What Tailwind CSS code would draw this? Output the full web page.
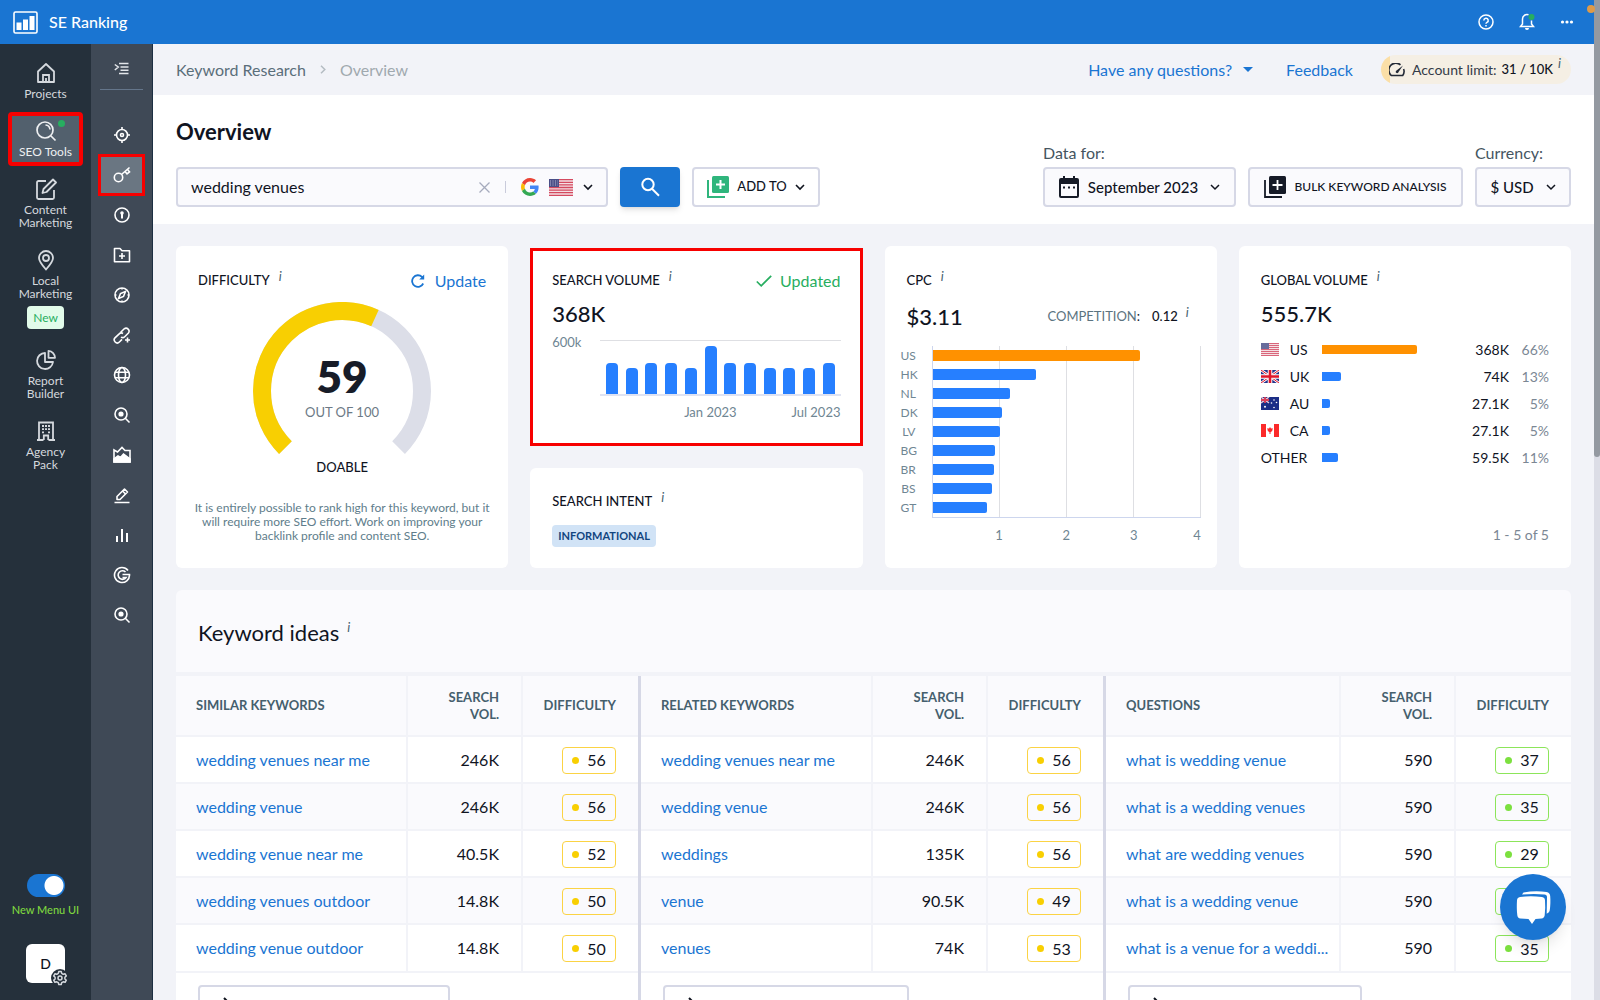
<!DOCTYPE html>
<html lang="en">
<head>
    <meta charset="UTF-8">
    <meta name="viewport" content="width=device-width, initial-scale=1.0">
    <title>SE Ranking - Keyword Research</title>
    <script src="https://cdn.jsdelivr.net/npm/@tailwindcss/browser@4"></script>
</head>
<body class="h-screen overflow-hidden flex flex-col bg-[#f2f3f8] font-['Lato','Noto_Sans',sans-serif] text-base text-[#10141f]">

    <!-- Top bar -->
    <header class="h-11 shrink-0 flex items-center justify-between bg-[#1a75d2] text-white pl-[13px] pr-[26px]">
        <a href="#" class="flex items-center gap-[11px] font-medium">
            <svg class="w-[25px] h-[23px]" viewBox="0 0 25 23"><rect x="1" y="1" width="23" height="21" rx="1.5" fill="none" stroke="#fff" stroke-width="1.6"/><path fill="#fff" d="M3.5 11.5h5V19h-5zM10 8.500h5V19h-5zM16.500 5h5v14h-5z"/></svg>
            SE Ranking
        </a>
        <div class="flex items-center gap-[25px]">
            <button aria-label="Help">
                <svg class="w-4 h-4" viewBox="0 0 16 16" fill="none" stroke="#fff" stroke-width="1.5"><circle cx="8" cy="8" r="7"/><path d="M5.800 6.400a2.200 2.200 0 1 1 3.200 2c-.7.4-1 .7-1 1.400"/><path d="M8 11v1.400"/></svg>
            </button>
            <button aria-label="Notifications">
                <svg class="w-4 h-[18px]" viewBox="0 0 16 18"><path fill="none" stroke="#fff" stroke-width="1.5" d="M9.500 1.800A4.500 4.500 0 0 0 3.500 6v5L1.500 13.500h13L12.500 11V7.500"/><path fill="#fff" d="M6 15h4a2 2 0 0 1-4 0z"/><circle cx="12.500" cy="4" r="3" fill="#27ae60"/></svg>
            </button>
            <button aria-label="More">
                <svg class="w-[14px] h-4" viewBox="0 0 14 16" fill="#fff"><circle cx="2.500" cy="8" r="1.600"/><circle cx="7" cy="8" r="1.600"/><circle cx="11.500" cy="8" r="1.600"/></svg>
            </button>
        </div>
    </header>

    <div class="flex flex-1 min-h-0">
        <!-- Main menu -->
        <nav class="w-[91px] shrink-0 flex flex-col bg-[#25303b] text-[#d5d9de] text-xs leading-[13px] text-center pt-2">
            <a href="#" class="flex flex-col items-center gap-[3px] py-[10px]">
                <svg class="w-[22px] h-[22px]" viewBox="0 0 22 22" fill="none" stroke="currentColor" stroke-width="1.8"><path d="M3 9.500 11 2l8 7.500V20H3z" stroke-linejoin="round"/><path d="M8 20v-7h6v7M11 20v-4"/></svg>
                Projects
            </a>
            <a href="#" class="relative flex flex-col items-center gap-[3px] mx-2 my-[2px] py-1 border-4 border-[#f70000] rounded-sm bg-[#52606d] text-[#eef0f2]">
                <svg class="w-[22px] h-[22px]" viewBox="0 0 22 22" fill="none" stroke="currentColor" stroke-width="1.700"><circle cx="10" cy="10" r="8"/><path d="m16 16 4.500 4.500M10.500 5a5 5 0 0 1 4.500 4.500"/></svg>
                <span class="absolute right-[14px] top-1 w-[7px] h-[7px] rounded-full bg-[#27ae60]"></span>
                <span class="whitespace-nowrap">SEO Tools</span>
            </a>
            <a href="#" class="flex flex-col items-center gap-[3px] py-[10px]">
                <svg class="w-[22px] h-[22px]" viewBox="0 0 22 22" fill="none" stroke="currentColor" stroke-width="1.800" stroke-linejoin="round"><path d="M11 3H3.500A1.500 1.500 0 0 0 2 4.500v15A1.500 1.500 0 0 0 3.500 21h14a1.500 1.500 0 0 0 1.500-1.500V12"/><path d="M18 1.500 21 4.500 11.500 14 7.500 15l1-4z"/></svg>
                <span>Content<br>Marketing</span>
            </a>
            <a href="#" class="flex flex-col items-center gap-[3px] py-[10px]">
                <svg class="w-[22px] h-[22px]" viewBox="0 0 22 22" fill="none" stroke="currentColor" stroke-width="1.800"><path d="M11 20.500C7 16 4 12.500 4 9a7 7 0 0 1 14 0c0 3.500-3 7-7 11.500z"/><circle cx="11" cy="9" r="3"/></svg>
                <span>Local<br>Marketing</span>
                <span class="mt-[3px] w-[37px] h-[23px] leading-[23px] rounded bg-[#e2fbea] text-[#27ae60]">New</span>
            </a>
            <a href="#" class="flex flex-col items-center gap-[3px] py-[10px]">
                <svg class="w-[22px] h-[22px]" viewBox="0 0 22 22" fill="none" stroke="currentColor" stroke-width="1.800" stroke-linejoin="round"><path d="M10 4a8 8 0 1 0 8 9h-8z"/><path d="M13.500 1.800a7 7 0 0 1 6.500 7h-6.500z"/></svg>
                <span>Report<br>Builder</span>
            </a>
            <a href="#" class="flex flex-col items-center gap-[3px] py-[10px]">
                <svg class="w-[22px] h-[22px]" viewBox="0 0 22 22" fill="none" stroke="currentColor" stroke-width="1.800"><path d="M4 20V2.500h14V20M2 20h6.500M13.500 20H20M8.800 20v-4.500h4.400V20"/><path d="M7 6h2M10 6h2M13 6h2M7 9.200h2M10 9.200h2M13 9.200h2M7 12.400h2M13 12.400h2"/></svg>
                <span>Agency<br>Pack</span>
            </a>
            <label class="mt-auto flex flex-col items-center gap-[6px] text-[11px] text-[#7ed63f] whitespace-nowrap font-medium">
                <input type="checkbox" checked class="appearance-none w-[38px] h-[23px] rounded-full bg-[#1a75d2] bg-[radial-gradient(circle_at_27px_center,white_9px,transparent_10px)]">
                New Menu UI
            </label>
            <button class="relative mt-7 mb-[17px] mx-auto w-[39px] h-[39px] rounded-md bg-white text-[#10141f] text-sm font-medium">D
                <svg class="absolute -right-1 -bottom-1 w-[18px] h-[18px]" viewBox="0 0 18 18"><circle cx="9" cy="9" r="9" fill="#25303b"/><path fill="none" stroke="#d5d9de" stroke-width="1.500" stroke-linejoin="round" d="m7.800 2.500h2.400l.5 1.900 1.500.9 1.900-.5 1.200 2.100-1.400 1.300v1.700l1.400 1.300-1.200 2.100-1.900-.5-1.500.9-.5 1.900H7.800l-.5-1.900-1.500-.9-1.900.5-1.200-2.100 1.400-1.300V8.200L2.700 6.900l1.200-2.100 1.900.5 1.500-.9z"/><circle cx="9" cy="9" r="2" fill="none" stroke="#d5d9de" stroke-width="1.500"/></svg>
            </button>
        </nav>

        <!-- SEO tools menu -->
        <nav class="w-[62px] shrink-0 flex flex-col bg-[#3f4956] border-r border-[#1d2f42] text-white">
            <button aria-label="Expand menu" class="mx-[9px] h-[46px] mb-[25px] flex items-center justify-center border-b border-[#64758a]">
                <svg class="w-[15px] h-[13px] mt-1" viewBox="0 0 15 13" fill="none" stroke="#e3e6ea" stroke-width="1.500"><path d="M5 1.500h9.500M6.500 5h8M6.500 8.200h8M5 11.500h9.500M.8 2.500 4.300 5 .8 8"/></svg>
            </button>
            <div id="toolMenu" class="flex flex-col items-center"></div>
        </nav>

        <main class="flex-1 min-w-0 flex flex-col">
            <div class="h-[51px] shrink-0 flex items-center px-[23px]">
                <nav class="flex items-center gap-[14px]" aria-label="Breadcrumb">
                    <a href="#" class="text-[#5a6e7a]">Keyword Research</a>
                    <svg class="w-[6px] h-[9px]" viewBox="0 0 6 9" fill="none" stroke="#b4bcc2" stroke-width="1.500"><path d="m1 .8 3.800 3.700L1 8.200"/></svg>
                    <span class="text-[#a0a9af]">Overview</span>
                </nav>
                <div class="ml-auto flex items-center text-[#1a75d2]">
                    <button class="flex items-center gap-[11px]">Have any questions?
                        <svg class="w-[10px] h-[5px]" viewBox="0 0 10 5" fill="currentColor"><path d="M0 0h10L5 5z"/></svg>
                    </button>
                    <a href="#" class="ml-[33px]">Feedback</a>
                    <div class="ml-7 w-[190px] h-[29px] pl-2 flex items-center rounded-full bg-[linear-gradient(90deg,#fbdfa7_9px,#f5efe4_9px)] text-sm text-[#333a47]">
                        <svg class="w-4 h-[14px] mr-[7px]" viewBox="0 0 16 14" fill="none" stroke="#222936" stroke-width="1.600"><path d="M11.500 1.800A6.800 6.800 0 0 0 2.300 12.500h11.400a6.800 6.800 0 0 0 .9-6.500"/><path d="M14 2.500 9.500 9a1.400 1.400 0 1 1-2-1.500z" fill="#222936" stroke="none"/></svg>
                        Account limit:
                        <span class="ml-[5px] text-[13px] text-[#10141f] font-medium">31 / 10K</span>
                        <i class="ml-[5px] mb-3 text-[13px] text-[#45606d]">i</i>
                    </div>
                </div>
            </div>

            <section class="h-[129px] shrink-0 bg-white px-[23px] flex justify-between items-end pb-[17px]">
                <div>
                    <h1 class="text-[22px] leading-7 font-bold mb-[21px]">Overview</h1>
                    <div class="flex gap-3">
                        <div class="w-[432px] h-10 flex items-center px-[13px] border-2 border-[#d6d8e6] rounded bg-[#fafafd]">
                            <input type="text" value="wedding venues" aria-label="Keyword" class="flex-1 min-w-0 outline-none">
                            <button aria-label="Clear">
                                <svg class="w-[11px] h-[11px]" viewBox="0 0 11 11" stroke="#a6abbd" stroke-width="1.300"><path d="m.5.5 10 10M10.500.5l-10 10"/></svg>
                            </button>
                            <span class="mx-[15px] w-px h-3 bg-[#c9cbdb]"></span>
                            <button aria-label="Search engine" class="flex items-center gap-[10px]">
                                <svg class="w-[18px] h-[18px]" viewBox="0 0 48 48"><path fill="#EA4335" d="M24 9.500c3.540 0 6.710 1.220 9.210 3.600l6.850-6.850C35.900 2.380 30.470 0 24 0 14.620 0 6.510 5.380 2.560 13.220l7.980 6.190C12.430 13.720 17.740 9.500 24 9.500z"/><path fill="#4285F4" d="M46.980 24.550c0-1.570-.15-3.090-.38-4.550H24v9.020h12.940c-.58 2.960-2.260 5.480-4.780 7.180l7.730 6c4.510-4.180 7.090-10.360 7.090-17.650z"/><path fill="#FBBC05" d="M10.530 28.590c-.48-1.450-.76-2.990-.76-4.590s.27-3.140.76-4.590l-7.980-6.190C.92 16.460 0 20.120 0 24c0 3.880.92 7.540 2.560 10.780l7.970-6.190z"/><path fill="#34A853" d="M24 48c6.480 0 11.930-2.130 15.890-5.810l-7.730-6c-2.150 1.450-4.920 2.300-8.160 2.300-6.260 0-11.570-4.220-13.470-9.910l-7.980 6.190C6.510 42.620 14.620 48 24 48z"/></svg>
                                <svg class="w-6 h-[17px]" viewBox="0 0 24 17"><rect width="24" height="17" fill="#f4dfe3"/><path stroke="#d44a60" stroke-width="1.300" d="M0 .7h24M0 3.300h24M0 5.900h24M0 8.500h24M0 11.100h24M0 13.700h24M0 16.300h24"/><rect width="10" height="8" fill="#4a4f87"/><path stroke="#b4b6d2" stroke-dasharray="1 1.500" d="M1 2h8M1 4h8M1 6h8"/></svg>
                                <svg class="w-[10px] h-[7px]" viewBox="0 0 10 7" fill="none" stroke="currentColor" stroke-width="1.600"><path d="m1 1 4 4 4-4"/></svg>
                            </button>
                        </div>
                        <button aria-label="Search" class="w-[60px] h-10 flex items-center justify-center rounded bg-[#1a75d2] shadow-md shadow-black/10">
                            <svg class="w-5 h-5" viewBox="0 0 20 20" fill="none" stroke="#fff" stroke-width="2"><circle cx="8" cy="7.500" r="5.700"/><path d="m12 11.800 7 7"/></svg>
                        </button>
                        <button class="w-32 h-10 flex items-center justify-center gap-2 border-2 border-[#d6d8e6] rounded text-[13px] font-medium">
                            <svg class="w-[22px] h-[22px]" viewBox="0 0 22 22"><rect x="5" width="17" height="17" rx="1.500" fill="#2fb57c"/><path d="M13.500 4v9M9 8.500h9" stroke="#fff" stroke-width="2"/><path d="M1 4v17h17" fill="none" stroke="#2fb57c" stroke-width="2"/></svg>
                            ADD TO
                            <svg class="w-[10px] h-[7px]" viewBox="0 0 10 7" fill="none" stroke="currentColor" stroke-width="1.600"><path d="m1 1 4 4 4-4"/></svg>
                        </button>
                    </div>
                </div>
                <div class="flex items-end gap-3">
                    <div>
                        <div class="leading-5 mb-1 text-[#45555f]">Data for:</div>
                        <button class="w-[193px] h-10 flex items-center justify-center border-2 border-[#d6d8e6] rounded bg-[#fafafd] font-medium">
                            <svg class="w-5 h-[22px] mr-[9px]" viewBox="0 0 20 22"><path fill="#161b27" d="M2 2h2V0h2v2h8V0h2v2h2a2 2 0 0 1 2 2v16a2 2 0 0 1-2 2H2a2 2 0 0 1-2-2V4a2 2 0 0 1 2-2zm0 6v12h16V8z"/><path fill="#161b27" d="M4 10.500h2v2H4zM9 10.500h2v2H9zM14 10.500h2v2h-2z"/></svg>
                            <span class="text-[15px]">September 2023</span>
                            <svg class="w-[10px] h-[7px] ml-3" viewBox="0 0 10 7" fill="none" stroke="currentColor" stroke-width="1.500"><path d="m1 1 4 4 4-4"/></svg>
                        </button>
                    </div>
                    <button class="w-[215px] h-10 flex items-center justify-center gap-2 border-2 border-[#d6d8e6] rounded bg-[#fafafd] text-xs font-medium whitespace-nowrap">
                        <svg class="w-[22px] h-[22px]" viewBox="0 0 22 22"><rect x="5" width="17" height="18" rx="1.500" fill="#161b27"/><path d="M13.500 4v10M8.500 9h10" stroke="#fff" stroke-width="1.800"/><path d="M1 4v17h17" fill="none" stroke="#161b27" stroke-width="1.800"/></svg>
                        BULK KEYWORD ANALYSIS
                    </button>
                    <div>
                        <div class="leading-5 mb-1 text-[#45555f]">Currency:</div>
                        <button class="w-24 h-10 flex items-center justify-center gap-3 border-2 border-[#d6d8e6] rounded bg-[#fafafd] text-[15px] font-medium">
                            $ USD
                            <svg class="w-[10px] h-[7px]" viewBox="0 0 10 7" fill="none" stroke="currentColor" stroke-width="1.500"><path d="m1 1 4 4 4-4"/></svg>
                        </button>
                    </div>
                </div>
            </section>

            <div class="px-[23px] py-[22px] flex flex-col gap-[22px]">
                <div class="grid grid-cols-4 gap-[22px]">
                    <!-- Difficulty -->
                    <section class="h-[322px] flex flex-col bg-white rounded-md py-[23px] px-2">
                        <div class="h-6 flex items-center justify-between px-[14px]">
                            <h2 class="flex gap-[9px] text-[13px] font-medium">DIFFICULTY <i class="-mt-1 text-[13px] font-normal text-[#45606d]">i</i></h2>
                            <button class="flex items-center gap-[10px] text-[#1a75d2]">
                                <svg class="w-[14px] h-[14px]" viewBox="0 0 14 14" fill="none" stroke="currentColor" stroke-width="1.800"><path d="M12.200 9.500A5.800 5.800 0 1 1 11 2.900L12.500 4.400"/><path d="M13.200.5v5H8.200z" fill="currentColor" stroke="none"/></svg>
                                Update
                            </button>
                        </div>
                        <svg class="mt-[9px] w-[178px] h-[153px] self-center" viewBox="0 0 178 153">
                            <circle cx="89" cy="89" r="80" fill="none" stroke="#dcdee8" stroke-width="18" pathLength="360" stroke-dasharray="270 90" transform="rotate(135 89 89)"/>
                            <circle cx="89" cy="89" r="80" fill="none" stroke="#f8cf02" stroke-width="18" pathLength="360" stroke-dasharray="159.300 200.700" transform="rotate(135 89 89)"/>
                            <text x="89" y="91" text-anchor="middle" class="text-[44px] font-extrabold fill-[#171c28]">59</text>
                            <text x="89" y="115" text-anchor="middle" class="text-[13px] fill-[#6c7a86]">OUT OF 100</text>
                        </svg>
                        <p class="mt-1 text-[13px] leading-4 text-center font-medium">DOABLE</p>
                        <p class="mt-[26px] text-xs leading-[14px] text-center text-[#607d8b]">It is entirely possible to rank high for this keyword, but it<br>will require more SEO effort. Work on improving your<br>backlink profile and content SEO.</p>
                    </section>

                    <div class="flex flex-col gap-[22px]">
                        <!-- Search volume -->
                        <section class="mt-[2px] h-[198px] flex flex-col bg-white border-[3px] border-[#f70000] px-[19px] pt-[18px]">
                            <div class="h-6 flex items-center justify-between">
                                <h2 class="flex gap-[9px] text-[13px] font-medium">SEARCH VOLUME <i class="-mt-1 text-[13px] font-normal text-[#45606d]">i</i></h2>
                                <span class="flex items-center gap-2 text-[#27ae60]">
                                    <svg class="w-4 h-3" viewBox="0 0 16 12" fill="none" stroke="currentColor" stroke-width="1.700"><path d="m.8 6.500 4.400 4.300L15.200.8"/></svg>
                                    Updated
                                </span>
                            </div>
                            <p class="mt-[7px] text-[22px] leading-7 font-medium">368K</p>
                            <div class="mt-3 flex text-[13px] text-[#6f8693]">
                                <span class="w-12 leading-4 -mt-[6px]">600k</span>
                                <div class="flex-1">
                                    <div id="volumeBars" class="h-[56px] grid grid-cols-12 items-end justify-items-center px-[2px] border-t border-t-[#dedfe3] border-b-2 border-b-[#dfe3f2]"></div>
                                    <div class="mt-2 grid grid-cols-12 leading-4 whitespace-nowrap">
                                        <span class="col-start-4 col-span-5 text-center">Jan 2023</span>
                                        <span class="col-start-9 col-span-4 text-right">Jul 2023</span>
                                    </div>
                                </div>
                            </div>
                        </section>
                        <!-- Search intent -->
                        <section class="h-[100px] bg-white rounded-md px-[22px] pt-[22px]">
                            <h2 class="h-6 flex items-center gap-[9px] text-[13px] font-medium">SEARCH INTENT <i class="-mt-2 text-[13px] font-normal text-[#45606d]">i</i></h2>
                            <span class="inline-block mt-[11px] h-[22px] px-[6px] leading-[22px] rounded bg-[#d1e3f6] text-[#12457f] text-[11px] font-bold">INFORMATIONAL</span>
                        </section>
                    </div>

                    <!-- CPC -->
                    <section class="h-[322px] bg-white rounded-md py-[23px] px-4">
                        <h2 class="h-6 flex items-center gap-[9px] text-[13px] font-medium px-[6px]">CPC <i class="-mt-2 text-[13px] font-normal text-[#45606d]">i</i></h2>
                        <div class="mt-[10px] flex items-center px-[6px]">
                            <p class="text-[22px] leading-7 font-medium">$3.11</p>
                            <p class="ml-auto text-[13px]"><span class="text-[#5b7380]">COMPETITION</span>:<span class="ml-3 font-medium">0.12</span></p>
                            <i class="ml-2 mr-[6px] -mt-2 text-[13px] text-[#45606d]">i</i>
                        </div>
                        <div class="mt-[15px] flex">
                            <div id="cpcLabels" class="w-[31px] pr-4 text-right text-xs leading-[19px] text-[#6f8693]"></div>
                            <div class="flex-1">
                                <div class="relative border-l border-b border-[#cdd6ee]">
                                    <div class="absolute inset-0 grid grid-cols-4">
                                        <span class="border-r border-[#dedfe3]"></span><span class="border-r border-[#dedfe3]"></span><span class="border-r border-[#dedfe3]"></span><span class="border-r border-[#dedfe3]"></span>
                                    </div>
                                    <div id="cpcBars" class="relative"></div>
                                </div>
                                <div class="mt-[9px] grid grid-cols-4 text-[13px] leading-4 text-right text-[#6f8693]">
                                    <span class="-mr-1">1</span><span class="-mr-1">2</span><span class="-mr-1">3</span><span>4</span>
                                </div>
                            </div>
                        </div>
                    </section>

                    <!-- Global volume -->
                    <section class="h-[322px] flex flex-col bg-white rounded-md px-[22px] py-[23px]">
                        <h2 class="h-6 flex items-center gap-[9px] text-[13px] font-medium">GLOBAL VOLUME <i class="-mt-2 text-[13px] font-normal text-[#45606d]">i</i></h2>
                        <p class="mt-[7px] text-[22px] leading-7 font-medium">555.7K</p>
                        <table class="mt-2 w-full table-fixed text-sm">
                            <tbody id="globalRows"></tbody>
                        </table>
                        <p class="mt-auto text-right text-sm text-[#7b8794]">1 - 5 of 5</p>
                    </section>
                </div>

                <!-- Keyword ideas -->
                <section class="bg-[#fafafd] rounded-t-md">
                    <h2 class="h-[86px] flex items-center gap-2 px-[22px] pt-[2px] text-[22px] border-b-4 border-[#f2f3f8]">Keyword ideas <i class="-mt-2 text-[13px] text-[#45606d]">i</i></h2>
                    <div id="ideas" class="grid grid-cols-3"></div>
                </section>
            </div>
        </main>

        <div class="w-[6px] shrink-0 bg-[#dcdde6]"><div class="h-[413px] rounded-b bg-[#9499a1]"></div></div>
    </div>

    <span class="fixed top-0 right-0 w-[6px] h-11 bg-[#9499a1]"></span>
    <span class="fixed top-[5px] right-[5px] w-2 h-2 rounded-full bg-[#dd9a4a]"></span>

    <!-- Chat -->
    <button aria-label="Open chat" class="fixed right-[34px] bottom-[60px] w-[66px] h-[66px] rounded-full bg-[#1a75d2] shadow-lg flex items-center justify-center">
        <svg class="w-9 h-9" viewBox="0 0 36 36"><path fill="#fff" d="M8.500 3.500c8-1.500 16-1.500 23-.5 2.500.4 3.500 2 3.700 4 .4 4.500.3 10-.5 14.500-.3 1.500-1.500 2.500-3 3.200L32 8c0-1.500-1-2.300-2.500-2.500-7-.8-14-.8-22.500 0z"/><path fill="#fff" d="M5 8c7-1 14.500-1 22 0 2 .3 2.800 1.500 3 3.200.4 5 .3 10-.3 15-.3 2-1.300 3-3.200 3.300-2 .3-4 .5-6 .6L17 35l-3.500-4.900c-2.500-.1-5.500-.3-8-.6-2-.3-3-1.500-3.200-3.300-.6-5-.6-10-.3-15C2.200 9.500 3.200 8.300 5 8z"/></svg>
    </button>

    <script>
        // [label, svg shapes, active]
        const tools = [
            ['Rankings', '<circle cx="9" cy="9" r="5.500"/><circle cx="9" cy="9" r="1.500"/><path d="M9 1v2.500M9 14.500V17M1 9h2.500M14.500 9H17"/>'],
            ['Keyword Research', '<circle cx="5.500" cy="11.500" r="4.200"/><path d="M8.500 8.500 16.500 1.500M12 5.500l2 2.300 2.500-2-2-2.300"/>', true],
            ['Competitive Research', '<circle cx="9" cy="9" r="7"/><path d="M9 8v4.500" stroke-width="2"/><circle cx="9" cy="7" r="1" fill="currentColor"/>'],
            ['Marketing Plan', '<path d="M1.500 2.500h5.500l2 2.200h7.500v11h-15z" stroke-linejoin="round"/><path d="M9 7v6M6 10h6"/>'],
            ['Website Audit', '<circle cx="9" cy="9" r="7"/><path d="M12.500 5.500 10.500 10.500l-5 2 2-5z"/><path d="M9 2v1.500M9 14.500V16M2 9h1.500M14.500 9H16"/>'],
            ['Backlinks', '<path d="m7.500 6.500 3.700-3.700a3 3 0 0 1 4.200 4.200l-3.700 3.700a3 3 0 0 1-3.700.4"/><path d="M10 7.500a3 3 0 0 0-3.800.4l-4 3.800A3 3 0 0 0 6.400 16l2.600-2.600"/><path d="M14.500 11.500v5M12 14h5"/>'],
            ['Backlink Monitor', '<circle cx="9" cy="9" r="7.500"/><ellipse cx="9" cy="9" rx="3.500" ry="7.500"/><path d="M2 6.300h14M2 11.700h14"/>'],
            ['SERP Checker', '<circle cx="8" cy="8" r="6"/><circle cx="8" cy="8" r="1.800" fill="currentColor"/><path d="m12.300 12.300 4.200 4.200"/>'],
            ['Insights', '<path d="M1 4 4.500 6 9 1.500 12 4.500h5V16H1z"/><path d="M1 16v-3l4-3 2.500 1.500L10.500 8 17 13v3z" fill="currentColor"/>'],
            ['Page Changes', '<path d="M1.500 16.500h15M4 13.500V10.500L11.500 3 14.500 6 7 13.500z" stroke-linejoin="round"/><path d="M9.500 5 12.500 8"/>'],
            ['Traffic', '<path d="M4 10v6M9 3v13M14 7v9" stroke-width="2"/>'],
            ['Google Tools', '<path d="M15 4.500A7.500 7.500 0 1 0 16.500 8.500H9.500M12.500 6A4.300 4.300 0 1 0 13 11.500H9.500"/>'],
            ['Index Status', '<circle cx="8" cy="8" r="6"/><circle cx="8" cy="8" r="1.800" fill="currentColor"/><path d="m12.300 12.300 4.200 4.200"/>']
        ];
        document.getElementById('toolMenu').innerHTML = tools.map(([name, shapes, active]) => `
            <div class="h-10 flex items-center">
                <a href="#" aria-label="${name}" class="w-[41px] h-9 flex items-center justify-center ${active ? 'bg-[#6a7682] ring-3 ring-[#f70000]' : ''}">
                    <svg class="w-[18px] h-[18px]" viewBox="0 0 18 18" fill="none" stroke="currentColor" stroke-width="1.600">${shapes}</svg>
                </a>
            </div>`).join('');

        // Search volume by month, bar height in px
        const volumes = [31, 26, 31, 31, 26, 48, 31, 31, 26, 26, 26, 31];
        document.getElementById('volumeBars').innerHTML = volumes.map(h =>
            `<span class="w-3 rounded-t bg-[#267fff]" style="height:${h}px"></span>`).join('');

        // CPC by country
        const cpc = [['US', 3.09], ['HK', 1.54], ['NL', 1.16], ['DK', 1.03], ['LV', 1], ['BG', 0.93], ['BR', 0.91], ['BS', 0.88], ['GT', 0.82]];
        document.getElementById('cpcLabels').innerHTML = cpc.map(([c]) => `<div>${c}</div>`).join('');
        document.getElementById('cpcBars').innerHTML = cpc.map(([c, v], i) => `
            <div class="h-[19px] flex items-center">
                <span class="h-[11px] rounded-r-xs ${i === 0 ? 'bg-[#ff9100]' : 'bg-[#267fff]'}" style="width:${v / 4 * 100}%"></span>
            </div>`).join('');

        const flags = {
            US: '<rect width="18" height="13" fill="#f4dfe3"/><path stroke="#d9657a" d="M0 .5h18M0 2.500h18M0 4.500h18M0 6.500h18M0 8.500h18M0 10.500h18M0 12.500h18"/><rect width="8" height="6" fill="#686c9c"/>',
            UK: '<rect width="18" height="13" fill="#26348b"/><path stroke="#fff" stroke-width="2.600" d="m0 0 18 13M18 0 0 13"/><path stroke="#e0162b" d="m0 0 18 13M18 0 0 13"/><path stroke="#fff" stroke-width="4.500" d="M9 0v13M0 6.500h18"/><path stroke="#e0162b" stroke-width="2.600" d="M9 0v13M0 6.500h18"/>',
            AU: '<rect width="18" height="13" fill="#1b2e86"/><path stroke="#e9c9d6" stroke-width="1.500" d="m0 0 8 6M8 0 0 6"/><path stroke="#d9405a" stroke-width="1.800" d="M4 0v6M0 3h8"/><g fill="#fff"><circle cx="4" cy="9.800" r="1"/><circle cx="13" cy="3" r=".8"/><circle cx="13" cy="10.500" r=".8"/><circle cx="15.500" cy="5.500" r=".8"/><circle cx="10.500" cy="6" r=".8"/></g>',
            CA: '<rect width="18" height="13" fill="#fff"/><path fill="#fb2a2a" d="M0 0h5v13H0zM13 0h5v13h-5zM9 3l1 1.500 1.800-.3-.6 2.800-1.700 1.200V10h-1V8.200L6.800 7l-.6-2.800L8 4.500z"/>'
        };
        // [country, bar width, volume, share]
        const globalVolume = [['US', 95, '368K', '66%'], ['UK', 19, '74K', '13%'], ['AU', 8, '27.1K', '5%'], ['CA', 8, '27.1K', '5%'], ['OTHER', 16, '59.5K', '11%']];
        document.getElementById('globalRows').innerHTML = globalVolume.map(([c, w, vol, pct], i) => `
            <tr class="h-[27px]">
                <td class="w-[61px]"><div class="flex items-center gap-[11px]">${flags[c] ? `<svg class="w-[18px] h-[13px]" viewBox="0 0 18 13">${flags[c]}</svg>` : ''}${c}</div></td>
                <td><div class="h-[9px] rounded-r-xs ${i === 0 ? 'bg-[#ff9100]' : 'bg-[#267fff]'}" style="width:${w}px"></div></td>
                <td class="w-14 text-right">${vol}</td>
                <td class="w-10 text-right text-[#7b8794]">${pct}</td>
            </tr>`).join('');

        const ideas = [
            ['SIMILAR KEYWORDS', 'w-[252px]', [['wedding venues near me', '246K', 56], ['wedding venue', '246K', 56], ['wedding venue near me', '40.5K', 52], ['wedding venues outdoor', '14.8K', 50], ['wedding venue outdoor', '14.8K', 50]]],
            ['RELATED KEYWORDS', 'w-[246px]', [['wedding venues near me', '246K', 56], ['wedding venue', '246K', 56], ['weddings', '135K', 56], ['venue', '90.5K', 49], ['venues', '74K', 53]]],
            ['QUESTIONS', 'w-[234px]', [['what is wedding venue', '590', 37], ['what is a wedding venues', '590', 35], ['what are wedding venues', '590', 29], ['what is a wedding venue', '590', 35], ['what is a venue for a weddi...', '590', 35]]]
        ];
        document.getElementById('ideas').innerHTML = ideas.map(([title, btn, rows], g) => `
            <div class="bg-white ${g < 2 ? 'border-r-[3px] border-[#d6d8e6]' : ''}">
                <table class="w-full table-fixed border-separate border-spacing-0">
                    <thead class="bg-[#fafafd] text-[13px] leading-[17px] text-[#455f6d]">
                        <tr class="h-[61px]">
                            <th class="pl-5 text-left font-bold border-b-2 border-r-2 border-[#f2f3f8]">${title}</th>
                            <th class="w-[115px] pr-[22px] text-right font-bold border-b-2 border-r-2 border-[#f2f3f8]">SEARCH<br>VOL.</th>
                            <th class="w-[115px] pr-[22px] text-right font-bold border-b-2 border-[#f2f3f8]">DIFFICULTY</th>
                        </tr>
                    </thead>
                    <tbody>
                        ${rows.map(([kw, vol, diff], i) => `
                        <tr class="${i === 4 ? 'h-12' : 'h-[47px]'} ${i % 2 ? 'bg-[#fafafd]' : 'bg-white'}">
                            <td class="pl-5 border-b-2 border-r-2 border-[#f2f3f8] whitespace-nowrap"><a href="#" class="text-[#1a75d2]">${kw}</a></td>
                            <td class="pr-[22px] text-right border-b-2 border-r-2 border-[#f2f3f8]">${vol}</td>
                            <td class="pr-[22px] text-right border-b-2 border-[#f2f3f8]">
                                <span class="inline-flex w-[54px] h-[27px] items-center justify-center gap-2 rounded border ${diff < 40 ? 'border-[#8ce55a]' : 'border-[#fbd344]'}">
                                    <span class="w-[7px] h-[7px] rounded-full ${diff < 40 ? 'bg-[#7ce03f]' : 'bg-[#f8cf02]'}"></span>${diff}
                                </span>
                            </td>
                        </tr>`).join('')}
                    </tbody>
                </table>
                <button aria-label="View all" class="${btn} h-10 mt-3 mb-4 ml-[22px] px-5 flex items-center border-2 border-[#d6d8e6] rounded">
                    <svg class="w-4 h-4" viewBox="0 0 16 16" fill="none" stroke="currentColor" stroke-width="2"><path d="m4 1 7 7-7 7"/></svg>
                </button>
            </div>`).join('');
    </script>
</body>
</html>
